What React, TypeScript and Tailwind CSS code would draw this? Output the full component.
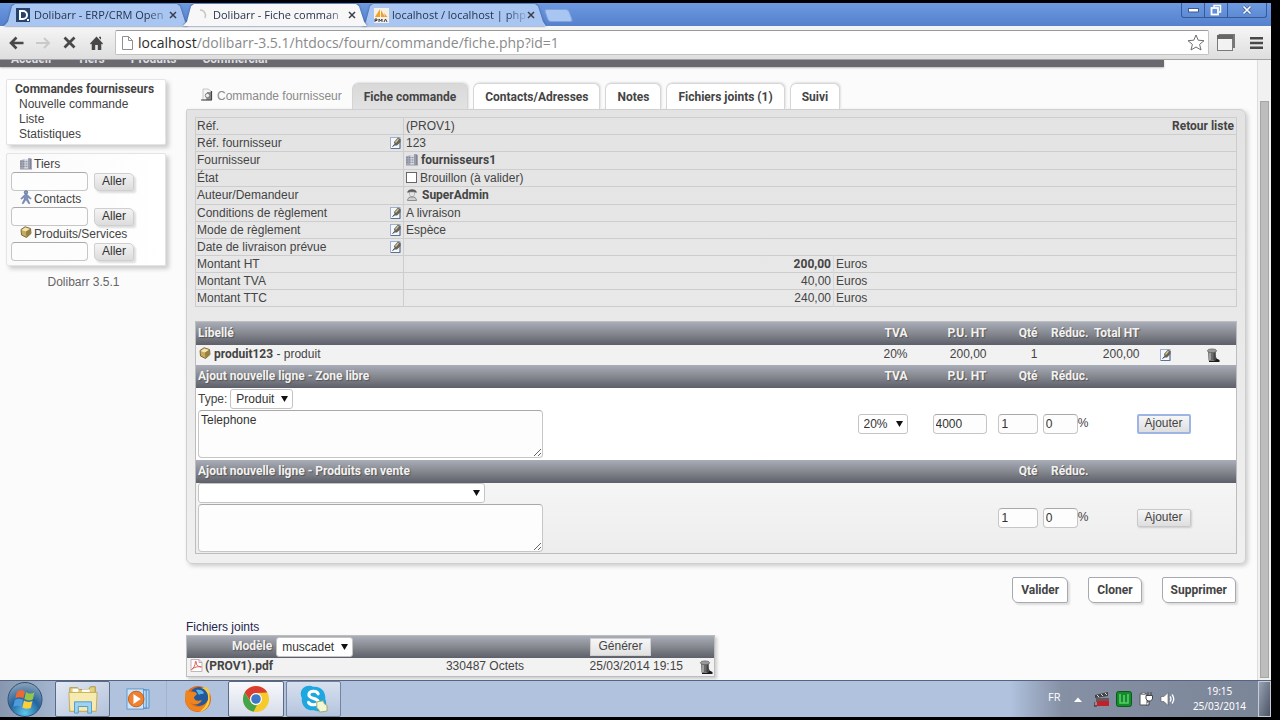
import React from "react";

const FIELD =
  "rounded-[4px] border border-[#c6c6c6] border-t-[#a9a9a9] bg-[#fdfdfd] text-[12px] text-[#333] outline-none";

const BOLD = "font-['Roboto','Liberation_Sans',sans-serif] font-bold";

function EditIcon() {
  return (
    <svg className="block shrink-0" width="11" height="13" viewBox="0 0 11 13">
      <rect x=".5" y="1.5" width="9.5" height="11" fill="#f4f8fd" stroke="#9db0d0" />
      <path d="M10 3v9.500H1" stroke="#5d6f94" fill="none" />
      <path d="M3 9.500l1.500-1.500L4 6l4-4.500L10.500 3v3L7 9.500z" fill="#66645a" />
      <path d="M5.500 6.500l3-3.500" stroke="#d8c98c" strokeWidth="1.200" />
      <path d="M2.500 10.500l2-1.500" stroke="#333" />
    </svg>
  );
}

function TrashIcon() {
  return (
    <svg className="block shrink-0" width="14" height="14" viewBox="0 0 14 14">
      <path d="M8.500 3.500l2 7 3 1.500v2H3v-1.500h5z" fill="#1c1c1c" />
      <path d="M2 3h8l-.5 9.500h-7z" fill="#6a6a6a" />
      <path d="M4 4v8" stroke="#b2b2b2" strokeWidth="1.500" />
      <path d="M8.500 4l-.3 8" stroke="#444" strokeWidth="1.500" />
      <ellipse cx="6" cy="2.800" rx="4.600" ry="1.900" fill="#9a9a9a" stroke="#5c5c5c" strokeWidth=".7" />
    </svg>
  );
}

function CompanyIcon() {
  return (
    <svg className="-mt-[2px] inline-block shrink-0" width="13" height="13" viewBox="0 0 14 13">
      <path d="M0 3l5-1v10.500H0z" fill="#a5a8b4" />
      <path d="M5 2h4v10.500H5z" fill="#d5d8e0" />
      <path d="M9 .5l3.500.8v11H9z" fill="#74788a" />
      <path d="M0 4.500h9M0 7h9M0 9.500h9" stroke="#7b8092" strokeDasharray="2 1" />
      <path d="M10.500 1v11" stroke="#a9adbb" />
      <path d="M0 12.500h13" stroke="#9b9ba3" />
    </svg>
  );
}

function PersonIcon() {
  return (
    <svg className="-mt-[4px] inline-block shrink-0" width="12" height="14" viewBox="0 0 12 14">
      <circle cx="6" cy="2.400" r="1.700" fill="#8a9cc0" stroke="#526693" strokeWidth=".8" />
      <path d="M5 4.300h2l4.200 4.200-.7.700L7.700 7l.3 2.500 1.900 4H8.500L6 9.500l-2.500 4H2.100l1.900-4L4.300 7 1.500 9.200.8 8.500z" fill="#7d90b8" stroke="#5b6f9c" strokeWidth=".5" />
    </svg>
  );
}

function ProductIcon() {
  return (
    <svg className="-mt-[4px] inline-block shrink-0" width="12" height="12" viewBox="0 0 12 12">
      <path d="M1 3.500L5 .8l5.500 1.700.5 5L6.500 11.500 1.500 9z" fill="#c9a95a" stroke="#6f6034" strokeWidth=".9" />
      <path d="M1.500 4L5.200 1.500 10 3 6 5.500z" fill="#f3e6b4" />
      <path d="M6 5.500l.4 5.600 4.100-3.600L10 3z" fill="#96803f" />
    </svg>
  );
}

function UserIcon() {
  return (
    <svg className="-mt-[3px] inline-block shrink-0" width="12" height="13" viewBox="0 0 12 13">
      <path d="M1 4.500C2 0 10 0 11 4.500z" fill="#5c5c5c" />
      <path d="M3.500 4h5v2.500L7.500 8.500h-3l-1-2z" fill="#e4e4e4" stroke="#999" strokeWidth=".6" />
      <path d="M1.500 12.500C1.500 9.500 4 9 6 9s4.500.5 4.500 3.500z" fill="#cfcfcf" stroke="#777" strokeWidth=".8" />
    </svg>
  );
}

function OrderIcon() {
  return (
    <svg className="-mt-[4px] block shrink-0" width="12" height="13" viewBox="0 0 12 13">
      <path d="M2 1h5l3 2v9H2z" fill="#f4f4f4" stroke="#bbb" strokeWidth=".8" />
      <path d="M6 1v3h4v8H5l1-5z" fill="#8d8d8d" />
      <circle cx="6.500" cy="7.500" r="2.200" fill="#eee" stroke="#666" strokeWidth=".8" />
      <path d="M0 12h11M10.500 3v9" stroke="#444" strokeWidth="1.200" />
    </svg>
  );
}

function PdfIcon() {
  return (
    <svg className="-mt-[3px] inline-block shrink-0" width="13" height="13" viewBox="0 0 13 13">
      <path d="M1 .5h8l3 3v9H1z" fill="#fff" stroke="#c4b4b4" />
      <path d="M9 .5v3h3" fill="none" stroke="#b9a5a5" />
      <path d="M1.500 10.500c2-1 4-4.500 3.800-7.500 0-1 1-1 .9 0C6 6 8 8 11.500 8 8 6.800 4 8.500 1.500 10.500z" fill="none" stroke="#d8605a" />
    </svg>
  );
}

function CloseX() {
  return (
    <svg width="8" height="8" viewBox="0 0 8 8">
      <path d="M1 1l6 6M7 1L1 7" stroke="#3c3f4a" strokeWidth="1.500" />
    </svg>
  );
}

function BrowserTab({ icon, title, active, first }: { icon: React.ReactNode; title: string; active?: boolean; first?: boolean }) {
  return (
    <div className={`${active ? "z-10" : ""} ${first ? "" : "-ml-[5px]"} drop-shadow-[0_0_1px_#2f4f8c]`}>
      <div
        className={`${active ? "bg-[#f7f7f7]" : "bg-[#a9c6f2]"} flex h-[22px] w-[184px] items-center pr-[10px] pl-[12px] [clip-path:polygon(0_100%,4px_80%,8px_10%,11px_0,173px_0,176px_10%,181px_80%,100%_100%)]`}
      >
        <span className="flex w-[18px] shrink-0">{icon}</span>
        <button className="w-[134px] shrink-0 text-left text-[11px] leading-[20px] whitespace-nowrap text-[#26334d] [mask-image:linear-gradient(to_right,#000_114px,transparent_138px)]">
          {title}
        </button>
        <button aria-label="Fermer l'onglet" className="ml-[1px]">
          <CloseX />
        </button>
      </div>
    </div>
  );
}

function BrowserTop() {
  return (
    <header className="shrink-0 font-['Open_Sans',sans-serif]">
      <div className="flex h-[23px] items-end bg-linear-to-b from-[#6d9ae0] to-[#5580cc] pl-[4px]">
        <BrowserTab
          first
          title="Dolibarr - ERP/CRM Open"
          icon={
            <svg width="14" height="14" viewBox="0 0 14 14">
              <rect width="14" height="14" fill="#25436b" />
              <path d="M4 3h3a4 4 0 010 8H4z" fill="none" stroke="#fff" strokeWidth="2" />
              <rect x="11" y="11" width="2" height="2" fill="#fff" />
            </svg>
          }
        />
        <BrowserTab
          active
          title="Dolibarr - Fiche comman"
          icon={
            <svg width="14" height="14" viewBox="0 0 14 14">
              <path d="M5 2a5.500 5.500 0 015 8" fill="none" stroke="#c6c6c6" strokeWidth="1.600" />
            </svg>
          }
        />
        <BrowserTab
          title="localhost / localhost | php"
          icon={
            <svg width="15" height="15" viewBox="0 0 15 15">
              <rect width="15" height="15" fill="#f6f1e6" />
              <path d="M1 9L6 1v8zM7 9V2l4 7zM11 9l-1-4 3.500 4z" fill="#f0a02c" />
              <path d="M1 14v-3h2v1.500H1M5 14v-3l1.500 2L8 11v3M10 14l1.500-3 1.500 3" fill="none" stroke="#3b3b55" />
            </svg>
          }
        />
        <button aria-label="Nouvel onglet" className="mb-[4px] h-[13px] w-[25px] skew-x-[20deg] rounded-[3px] border border-[#7ea3de] bg-[#a9c6f2]" />
        <div className="mr-[4px] ml-auto flex h-[15px] self-start rounded-b-[3px] border border-t-0 border-[#35599c]">
          <button aria-label="Réduire" className="flex w-[23px] items-center justify-center border-r border-[#35599c]">
            <svg width="11" height="5" viewBox="0 0 11 5">
              <rect x=".5" y=".5" width="10" height="3.500" fill="#fff" stroke="#3c5a91" />
            </svg>
          </button>
          <button aria-label="Restaurer" className="flex w-[23px] items-center justify-center border-r border-[#35599c]">
            <svg width="12" height="12" viewBox="0 0 12 12" fill="none">
              <path d="M4 3V1.500h6.500V8H9" stroke="#fff" strokeWidth="1.500" />
              <rect x="1.500" y="4" width="6.500" height="6.500" stroke="#fff" strokeWidth="1.800" />
            </svg>
          </button>
          <button aria-label="Fermer" className="flex w-[38px] items-center justify-center">
            <svg width="10" height="10" viewBox="0 0 10 10">
              <path d="M1.500 1.500l7 7M8.500 1.500l-7 7" stroke="#3c5a91" strokeWidth="3" />
              <path d="M1.500 1.500l7 7M8.500 1.500l-7 7" stroke="#fff" strokeWidth="1.700" />
            </svg>
          </button>
        </div>
      </div>
      <div className="flex h-[34px] items-center border-b border-[#a3a3a3] bg-linear-to-b from-[#f6f6f6] to-[#dedede] pr-[8px] pl-[9px]">
        <button aria-label="Retour" className="w-[27px]">
          <svg width="15" height="14" viewBox="0 0 15 14" fill="none" stroke="#484848" strokeWidth="2.600">
            <path d="M14.500 7H2M7.500 1.500L2 7l5.500 5.500" />
          </svg>
        </button>
        <button aria-label="Avancer" className="w-[27px]">
          <svg width="15" height="14" viewBox="0 0 15 14" fill="none" stroke="#c9c9c9" strokeWidth="2">
            <path d="M0 7h13M8 2l5 5-5 5" />
          </svg>
        </button>
        <button aria-label="Arrêter" className="w-[27px]">
          <svg width="13" height="13" viewBox="0 0 13 13" stroke="#484848" strokeWidth="2.800">
            <path d="M1.500 1.500l10 10M11.500 1.500l-10 10" />
          </svg>
        </button>
        <button aria-label="Accueil" className="w-[25px]">
          <svg width="13" height="14" viewBox="0 0 15 14" fill="#484848" preserveAspectRatio="none">
            <path d="M7.500.5L15 7.500l-1 1-1-.8V14H9V9H6v5H2V7.700l-1 .8-1-1zM10.500.8h2.200v3l-2.200-2z" />
          </svg>
        </button>
        <div className="flex h-[25px] min-w-0 flex-1 items-center rounded-[2px] border border-[#c2c2c2] border-t-[#9a9a9a] bg-white pr-[3px] pl-[6px]">
          <svg className="shrink-0" width="11" height="14" viewBox="0 0 11 14" fill="none" stroke="#8f8f8f">
            <path d="M.5.5h6l4 4v9H.5zM6.500.5v4h4" />
          </svg>
          <div className="ml-[5px] min-w-0 flex-1 truncate text-[14px] leading-[22px] text-[#8a8a8a]">
            <span className="text-[#2c2c2c]">localhost</span>/dolibarr-3.5.1/htdocs/fourn/commande/fiche.php?id=1
          </div>
          <button aria-label="Favoris">
            <svg width="18" height="17" viewBox="0 0 18 17" fill="none" stroke="#6e6e6e">
              <path d="M9 1l2.200 5.200 5.800.5-4.400 3.700 1.400 5.600L9 13l-5 3 1.400-5.600L1 6.700l5.800-.5z" />
            </svg>
          </button>
        </div>
        <button aria-label="Extension" className="ml-[8px]">
          <svg width="18" height="17" viewBox="0 0 18 17">
            <path d="M2 0h16v14h-2V3H0z" fill="#777" />
            <rect x=".5" y="3" width="15" height="13.500" fill="#f2f2f2" stroke="#7a7a7a" />
            <path d="M0 1h16v4H0z" fill="#666" />
          </svg>
        </button>
        <button aria-label="Menu" className="ml-[15px]">
          <svg width="13" height="12" viewBox="0 0 13 12" fill="#484848">
            <path d="M0 0h13v2.500H0zM0 4.700h13v2.500H0zM0 9.400h13v2.500H0z" />
          </svg>
        </button>
      </div>
    </header>
  );
}

function SearchBlock({ id, label, icon }: { id: string; label: string; icon: React.ReactNode }) {
  return (
    <div>
      <label htmlFor={id} className="flex h-[16px] items-center pl-[11px]">
        <span className="flex w-[16px] justify-center">{icon}</span>
        {label}
      </label>
      <div className="flex h-[19px] items-center gap-[6px] pl-[4px]">
        <input id={id} className={`${FIELD} h-[19px] w-[77px]`} />
        <button className="h-[18px] rounded-[2px] rounded-tr-[5px] rounded-bl-[5px] border border-[#cfcfcf] bg-linear-to-b from-[#f4f4f4] to-[#dcdcdc] px-[7px] text-[12px] leading-[15px] text-[#333] shadow-[2px_2px_2px_#ddd]">
          Aller
        </button>
      </div>
    </div>
  );
}

function Sidebar() {
  return (
    <aside className="w-[160px] shrink-0 pt-[12px] text-[12px] leading-[15px]">
      <nav className="flex flex-col rounded-[2px] border border-[#e4e4e4] bg-white pt-[2px] pb-[2px] pl-[8px] shadow-[3px_3px_4px_#ccc]">
        <a href="#commandes" className={`${BOLD} whitespace-nowrap`}>Commandes fournisseurs</a>
        <a href="#nouvelle" className="pl-[4px]">Nouvelle commande</a>
        <a href="#liste" className="pl-[4px]">Liste</a>
        <a href="#stats" className="pl-[4px]">Statistiques</a>
      </nav>
      <div className="mt-[8px] rounded-[2px] border border-[#e4e4e4] bg-linear-to-r from-[#fafafa] to-white pt-[2px] pb-[4px] shadow-[3px_3px_4px_#ccc]">
        <SearchBlock id="q-tiers" label="Tiers" icon={<CompanyIcon />} />
        <SearchBlock id="q-contacts" label="Contacts" icon={<PersonIcon />} />
        <SearchBlock id="q-produits" label="Produits/Services" icon={<ProductIcon />} />
      </div>
      <p className="mt-[9px] pr-[5px] text-center text-[#666]">Dolibarr 3.5.1</p>
    </aside>
  );
}

function Tabs() {
  const tabs = ["Fiche commande", "Contacts/Adresses", "Notes", "Fichiers joints (1)", "Suivi"];
  return (
    <div className="flex h-[26px] items-stretch gap-[5px] pl-[15px] text-[12px]">
      <div className="mr-[5px] flex items-center gap-[4px] text-[#8a8a8a]">
        <OrderIcon />
        <h1 className="whitespace-nowrap">Commande fournisseur</h1>
      </div>
      {tabs.map((t, i) => (
        <a
          key={t}
          href={`#tab${i}`}
          className={`${i === 0 ? "border-[#d4d4d4] bg-linear-to-b from-[#d9d9d9] to-[#e2e2e2]" : "border-[#d6d6d6] bg-white"} ${BOLD} flex items-center rounded-t-[6px] border border-b-0 px-[11px] whitespace-nowrap shadow-[1px_-1px_2px_#e2e2e2]`}
        >
          {t}
        </a>
      ))}
    </div>
  );
}

function InfoRow({ label, h = "h-[17px]", edit, children }: { label: string; h?: string; edit?: boolean; children?: React.ReactNode }) {
  return (
    <tr className={`${h} border-t border-[#cdcdcd]`}>
      <th className="border-r border-[#cdcdcd] p-0 pl-[1px] text-left font-normal">
        <div className="flex items-center justify-between pr-[2px]">
          {label}
          {edit && (
            <button aria-label={`Modifier ${label}`} className="-mt-[3px] -mb-[1px]">
              <EditIcon />
            </button>
          )}
        </div>
      </th>
      {children ?? <td colSpan={3} />}
    </tr>
  );
}

function Amount({ value, bold }: { value: string; bold?: boolean }) {
  return (
    <>
      <td className={`${bold ? BOLD : ""} border-r border-[#d8d8d8] p-0 pr-[2px] text-right`}>{value}</td>
      <td colSpan={2} className="p-0 pl-[2px]">Euros</td>
    </>
  );
}

function InfoTable() {
  return (
    <table className="w-full table-fixed border-collapse border border-[#cdcdcd] text-[12px] leading-[15px]">
      <colgroup>
        <col className="w-[208px]" />
        <col className="w-[430px]" />
        <col />
        <col className="w-[100px]" />
      </colgroup>
      <tbody>
        <InfoRow label="Réf.">
          <td colSpan={2} className="p-0 pl-[2px]">(PROV1)</td>
          <td className={`${BOLD} p-0 pr-[2px] text-right whitespace-nowrap`}><a href="#retour">Retour liste</a></td>
        </InfoRow>
        <InfoRow label="Réf. fournisseur" edit><td colSpan={3} className="p-0 pl-[2px]">123</td></InfoRow>
        <InfoRow label="Fournisseur" h="h-[18px]">
          <td colSpan={3} className={`${BOLD} p-0 pl-[2px]`}>
            <a href="#f1" className="flex items-center gap-[2px]"><CompanyIcon />fournisseurs1</a>
          </td>
        </InfoRow>
        <InfoRow label="État">
          <td colSpan={3} className="p-0 pl-[2px]">
            <label className="flex items-center gap-[3px]">
              <input type="checkbox" className="-mt-[2px] h-[11px] w-[11px] appearance-none border border-[#666] bg-white" />
              Brouillon (à valider)
            </label>
          </td>
        </InfoRow>
        <InfoRow label="Auteur/Demandeur" h="h-[18px]">
          <td colSpan={3} className={`${BOLD} p-0 pl-[2px]`}>
            <a href="#admin" className="flex items-center gap-[4px]"><UserIcon />SuperAdmin</a>
          </td>
        </InfoRow>
        <InfoRow label="Conditions de règlement" edit><td colSpan={3} className="p-0 pl-[2px]">A livraison</td></InfoRow>
        <InfoRow label="Mode de règlement" edit><td colSpan={3} className="p-0 pl-[2px]">Espèce</td></InfoRow>
        <InfoRow label="Date de livraison prévue" edit />
        <InfoRow label="Montant HT"><Amount value="200,00" bold /></InfoRow>
        <InfoRow label="Montant TVA"><Amount value="40,00" /></InfoRow>
        <InfoRow label="Montant TTC"><Amount value="240,00" /></InfoRow>
      </tbody>
    </table>
  );
}

function Select({ label, value, width, id }: { label: string; value: string; width: string; id?: string }) {
  return (
    <span className={`relative inline-block align-top ${width}`}>
      <select
        id={id}
        aria-label={label}
        className="block h-[20px] w-full appearance-none rounded-[3px] border border-[#c4c4c4] bg-white pl-[5px] font-['Liberation_Sans',Arial,sans-serif] text-[12px] leading-[16px] font-normal text-[#333]"
      >
        <option>{value}</option>
      </select>
      <svg className="pointer-events-none absolute top-[7px] right-[5px]" width="7" height="6" viewBox="0 0 7 6">
        <path d="M0 0h7L3.500 6z" fill="#111" />
      </svg>
    </span>
  );
}

function HeadRow({ cells }: { cells: string[] }) {
  return (
    <tr className={`${BOLD} h-[23px] bg-linear-to-b from-[#a9adb8] via-[#85888f] to-[#5d6069] text-[#f2f2f2] [text-shadow:1px_1px_1px_#555]`}>
      {cells.map((c, i) => (
        <th key={i} className={`${i === 0 ? "pl-[2px] text-left" : "pr-[2px] text-right"} p-0 whitespace-nowrap`}>
          {c}
        </th>
      ))}
    </tr>
  );
}

function QtyCells({ prefix }: { prefix: string }) {
  return (
    <>
      <td className="p-0 pr-[2px] text-right">
        <input aria-label="Qté" id={`${prefix}-qty`} defaultValue="1" className={`${FIELD} h-[20px] w-[40px] px-[3px] align-middle`} />
      </td>
      <td className="p-0 pr-[2px]">
        <div className="flex items-center justify-end">
          <input aria-label="Réduc." id={`${prefix}-red`} defaultValue="0" className={`${FIELD} h-[20px] w-[35px] px-[2px]`} />%
        </div>
      </td>
      <td />
    </>
  );
}

function LinesTable() {
  return (
    <table className="mt-[14px] w-full table-fixed border-collapse border border-[#bdbdbd] text-[12px] leading-[15px]">
      <colgroup>
        <col />
        <col className="w-[60px]" />
        <col className="w-[79px]" />
        <col className="w-[51px]" />
        <col className="w-[51px]" />
        <col className="w-[51px]" />
        <col className="w-[48px]" />
        <col className="w-[47px]" />
      </colgroup>
      <tbody>
        <HeadRow cells={["Libellé", "TVA", "P.U. HT", "Qté", "Réduc.", "Total HT", "", ""]} />
        <tr className="h-[20px] bg-[#f2f2f2]">
          <td className="p-0 pl-[3px]">
            <div className="flex items-center"><ProductIcon /><a href="#p123" className={`${BOLD} ml-[3px]`}>produit123</a>&nbsp;- produit</div>
          </td>
          <td className="p-0 pr-[2px] text-right">20%</td>
          <td className="p-0 pr-[2px] text-right">200,00</td>
          <td className="p-0 pr-[2px] text-right">1</td>
          <td />
          <td className="p-0 pr-[2px] text-right">200,00</td>
          <td className="p-0"><button aria-label="Modifier la ligne" className="mx-auto block"><EditIcon /></button></td>
          <td className="p-0"><button aria-label="Supprimer la ligne" className="mx-auto block"><TrashIcon /></button></td>
        </tr>
        <HeadRow cells={["Ajout nouvelle ligne - Zone libre", "TVA", "P.U. HT", "Qté", "Réduc.", "", "", ""]} />
        <tr className="h-[72px] bg-white">
          <td className="p-0 pl-[2px]">
            <div className="flex items-center gap-[3px] whitespace-nowrap">
              <label htmlFor="type">Type:</label>
              <Select id="type" label="Type" value="Produit" width="w-[63px]" />
            </div>
            <textarea aria-label="Description" defaultValue="Telephone" className={`${FIELD} mt-[1px] block h-[48px] w-[345px] px-[2px] pt-[2px] leading-[15px]`} />
          </td>
          <td className="p-0 pr-[2px] text-right"><Select label="TVA" value="20%" width="w-[50px]" /></td>
          <td className="p-0 pr-[2px] text-right"><input aria-label="P.U. HT" defaultValue="4000" className={`${FIELD} h-[20px] w-[54px] px-[2px] align-middle`} /></td>
          <QtyCells prefix="libre" />
          <td className="p-0">
            <button className="-ml-[5px] h-[20px] w-[54px] rounded-[2px] border-2 border-[#9db4e4] bg-linear-to-b from-[#f6f6f6] to-[#dedede] text-[12px] leading-[15px]">Ajouter</button>
          </td>
          <td />
        </tr>
        <HeadRow cells={["Ajout nouvelle ligne - Produits en vente", "", "", "Qté", "Réduc.", "", "", ""]} />
        <tr className="h-[71px] bg-linear-to-b from-[#f5f5f5] to-[#ededed]">
          <td className="p-0 pl-[2px]">
            <Select label="Produit en vente" value="" width="w-[287px]" />
            <textarea aria-label="Description du produit" className={`${FIELD} mt-[1px] block h-[48px] w-[345px] px-[2px]`} />
          </td>
          <td />
          <td />
          <QtyCells prefix="vente" />
          <td className="p-0">
            <button className="-ml-[5px] h-[18px] w-[54px] rounded-[2px] border border-[#c8c8c8] bg-linear-to-b from-[#f6f6f6] to-[#dedede] text-[12px] leading-[15px] shadow-[1px_1px_2px_#ccc]">Ajouter</button>
          </td>
          <td />
        </tr>
      </tbody>
    </table>
  );
}

function Files() {
  return (
    <section className="mt-[17px] w-[529px] text-[12px] leading-[15px]">
      <h2 className="text-[#25254d]">Fichiers joints</h2>
      <table className="w-full border-collapse border border-[#bdbdbd] shadow-[2px_2px_3px_#ccc]">
        <tbody>
          <tr className="h-[22px] bg-linear-to-b from-[#a9adb8] via-[#85888f] to-[#5d6069]">
            <th colSpan={2} className="p-0 pl-[45px] text-left text-[#f2f2f2]">
              <div className="flex items-center gap-[4px]">
                <label htmlFor="modele" className={`${BOLD} [text-shadow:1px_1px_1px_#555]`}>Modèle</label>
                <Select id="modele" label="Modèle" value="muscadet" width="w-[77px]" />
              </div>
            </th>
            <td className="p-0 pl-[18px] text-center">
              <button className="h-[18px] border border-[#d0d0d0] bg-linear-to-b from-[#f6f6f6] to-[#e2e2e2] px-[7px] leading-[15px]">Générer</button>
            </td>
            <td />
          </tr>
          <tr className="h-[19px] bg-[#f2f2f2]">
            <td className="p-0 pl-[3px]"><a href="#pdf" className={`${BOLD} flex items-center gap-[2px]`}><PdfIcon />(PROV1).pdf</a></td>
            <td className="w-[110px] p-0 text-right">330487 Octets</td>
            <td className="w-[175px] p-0 pr-[16px] text-right">25/03/2014 19:15</td>
            <td className="w-[1px] p-0 pr-[1px]"><button aria-label="Supprimer le fichier" className="block"><TrashIcon /></button></td>
          </tr>
        </tbody>
      </table>
    </section>
  );
}

function Page() {
  return (
    <div className="flex min-h-0 flex-1 bg-[#fbfbfb] font-['Liberation_Sans',Arial,sans-serif] text-[#444]">
      <div className="min-w-0 flex-1 overflow-hidden">
        <nav className={`${BOLD} mr-[93px] flex h-[7px] items-end gap-[26px] overflow-hidden bg-[#6a6970] pb-[1px] pl-[11px] text-[12px] leading-[14px] text-[#dddde2] shadow-[0_1px_2px_#bbb]`}>
          <a href="#accueil">Accueil</a>
          <a href="#tiers">Tiers</a>
          <a href="#produits">Produits</a>
          <a href="#commercial">Commercial</a>
        </nav>
        <div className="flex pr-[11px] pl-[6px]">
          <Sidebar />
          <main className="ml-[20px] min-w-0 flex-1 pt-[16px]">
            <Tabs />
            <div className="rounded-[6px] rounded-tl-[2px] border border-[#cfcfcf] bg-linear-to-b from-[#e3e3e3] to-[#f0f0f0] px-[8px] pt-[7px] pb-[9px] shadow-[2px_2px_4px_#ccc]">
              <InfoTable />
              <LinesTable />
            </div>
            <div className="mt-[13px] flex justify-end gap-[20px] pr-[10px] text-[12px]">
              {["Valider", "Cloner", "Supprimer"].map((b) => (
                <button key={b} className={`${BOLD} h-[26px] rounded-[2px] rounded-tr-[6px] rounded-bl-[6px] border border-[#a8a8b0] bg-white px-[8px] shadow-[2px_2px_2px_#ddd]`}>
                  {b}
                </button>
              ))}
            </div>
            <Files />
          </main>
        </div>
      </div>
      <div className="flex w-[14px] shrink-0 justify-center border-l border-[#dcdcdc] bg-[#f1f1f1] pt-[41px] pb-[2px]">
        <div className="w-[9px] border border-[#a5a5a5] bg-[#bdbdbd]" />
      </div>
    </div>
  );
}

function Taskbar() {
  return (
    <footer className="flex h-[37px] shrink-0 items-stretch border-t border-[#56657f] bg-linear-to-r from-[#8797af] via-[#b0c2de] via-6% to-[#b0c2de] font-['Open_Sans',sans-serif]">
      <button aria-label="Démarrer" className="flex w-[55px] items-center justify-center pr-[6px]">
        <svg width="36" height="35" viewBox="0 0 36 35">
          <defs>
            <radialGradient id="orb" cx=".5" cy=".9" r=".9">
              <stop offset="0" stopColor="#5cc6ee" />
              <stop offset=".5" stopColor="#24649d" />
              <stop offset="1" stopColor="#8fa4bb" />
            </radialGradient>
          </defs>
          <circle cx="18" cy="17.500" r="17" fill="url(#orb)" stroke="#33506f" />
          <path d="M10 9.500c3-2 5.500-2 8 0l-1.700 7c-2.700-1.700-5.300-1.700-8 0z" fill="#ea6a35" />
          <path d="M19 10c3 2 5.500 2 8.500.5l-1.700 7c-3 1.500-5.800 1-8.500-.5z" fill="#94c548" />
          <path d="M7.800 18c3-1.800 5.500-1.800 8.200 0l-1.700 7c-2.700-1.700-5.300-1.700-8 0z" fill="#4d9bdd" />
          <path d="M17 18.500c3 1.800 5.500 1.800 8.500.5l-1.700 7c-3 1.300-5.800 1-8.500-.5z" fill="#f9cf3b" />
        </svg>
      </button>
      <button aria-label="Explorateur" className="flex w-[55px] items-center justify-center rounded-[2px] border border-[#5c6a83] bg-linear-to-br from-[#e3e9f4] to-[#b3c1da]">
        <svg width="32" height="30" viewBox="0 0 34 30">
          <path d="M3 3h8l2 2h10l2-3h5v26H3z" fill="#e5d07b" stroke="#ab9345" />
          <path d="M6 4h6v4H6zM16 5h8v4h-8z" fill="#fff" />
          <path d="M2 8h30l-1 20H3z" fill="#f6eab0" stroke="#c3ab57" />
          <path d="M8 30V18h18v12h-4v-7H12v7z" fill="#9dd3f0" stroke="#4d9acb" />
        </svg>
      </button>
      <button aria-label="Lecteur multimédia" className="flex w-[57px] items-center justify-center border-r border-[#a1b3cf]">
        <svg width="26" height="22" viewBox="0 0 26 24">
          <path d="M8 2h17v20H8zM6 2h16v20H6z" fill="#b5d7f1" stroke="#4f8dc4" />
          <rect x="1" y="1" width="18" height="22" fill="#cfe4f6" stroke="#5b95c9" />
          <circle cx="11" cy="12" r="8.500" fill="#ee8232" stroke="#c45c12" />
          <path d="M8 6.500v11l8-5.500z" fill="#fff" />
        </svg>
      </button>
      <button aria-label="Firefox" className="flex w-[61px] items-center justify-center">
        <svg width="28" height="28" viewBox="0 0 28 28">
          <circle cx="14" cy="14" r="13" fill="#e36a17" />
          <circle cx="15" cy="11.500" r="9.500" fill="#235a9e" />
          <path d="M17 3c5 1 8 6 7 12 3-5 2-10-2-13z" fill="#f8c940" />
          <path d="M12 5c3-1 7 0 8 3-2 2-4 0-5 2z" fill="#5fb4df" />
          <path d="M2 5l4 2c3-1 6 0 7 2l-3 3c0 3 3 5 8 3-2 5-9 6-12 2 2 6 13 8 19-3 0 9-7 13-13 12C3 25-1 16 2 5z" fill="#ee8420" />
          <path d="M25 10c3 9-3 16-10 17 6-4 9-9 10-17z" fill="#fbd33f" />
        </svg>
      </button>
      <button aria-label="Chrome" className="flex w-[56px] items-center justify-center rounded-[2px] border border-[#5c6a83] bg-linear-to-b from-[#f8f9fc] to-[#d5dce9]">
        <svg width="28" height="28" viewBox="0 0 28 28">
          <circle cx="14" cy="14" r="13" fill="#f5ca2d" />
          <path d="M2.700 7.500A13 13 0 0125.300 7.500L14 8a6 6 0 00-5.500 8z" fill="#d93d31" />
          <path d="M2.700 7.500l6 9.500A6 6 0 0015 20l-3.500 6.800A13 13 0 012.700 7.500z" fill="#45a34b" />
          <circle cx="14" cy="14" r="6" fill="#fff" />
          <circle cx="14" cy="14" r="4.800" fill="#3f78c9" />
        </svg>
      </button>
      <button aria-label="Skype" className="ml-[2px] flex w-[55px] items-center justify-center rounded-[2px] border border-[#7484a0] bg-linear-to-b from-[#d7e0ef] to-[#b5c4de]">
        <svg width="28" height="28" viewBox="0 0 30 30">
          <path d="M8 1a7.500 7.500 0 016 1c8-1 14 5 13 13 4 8-4 16-12 12C7 28 1 22 2 14-1 8 2 2 8 1z" fill="#1da7e0" />
          <path d="M19.500 9.500C18 5.500 9.500 6 9.500 10.500c0 5 10 3 10 7.500 0 4-8.500 4.500-10.500.5" fill="none" stroke="#fff" strokeWidth="3.200" strokeLinecap="round" />
          <path d="M18 18l7-1 1 3 3 2v6l-8 1-1-3-2-1z" fill="#f2f7d5" stroke="#9ba765" />
        </svg>
      </button>
      <div className="ml-auto flex items-center bg-linear-to-r from-[#b0c2de] via-[#8590a4] via-20% to-[#7b8598] pl-[38px] text-[11px] text-white">
        <span className="w-[26px] pb-[4px]">FR</span>
        <button aria-label="Icônes cachées" className="w-[20px]">
          <svg width="8" height="5" viewBox="0 0 8 5"><path d="M0 5l4-4.500L8 5z" fill="#fff" /></svg>
        </button>
        <div className="flex w-[90px] items-center gap-[6px]">
          <svg width="16" height="16" viewBox="0 0 16 16">
            <path d="M1 4l13-3v4L1 7z" fill="#444" /><path d="M3 4l2 2M7 3l2 2M11 2l2 2" stroke="#ddd" />
            <path d="M2 7h13v4H2z" fill="#63585c" /><path d="M3 10h12v5H3z" fill="#c3202c" /><path d="M0 11v4h3" stroke="#511" fill="none" />
          </svg>
          <svg width="16" height="16" viewBox="0 0 16 16">
            <rect x=".5" y=".5" width="15" height="15" rx="2" fill="#178a2e" stroke="#0b5a1a" />
            <path d="M4 3v9h8V3M8 4v8" fill="none" stroke="#56cf68" strokeWidth="1.600" />
          </svg>
          <svg width="16" height="16" viewBox="0 0 16 16">
            <path d="M2 3h7v11H2z" fill="#fff" stroke="#555" /><path d="M4 1.500h3V3H4z" fill="#fff" stroke="#555" strokeWidth=".6" />
            <path d="M10 1v3M13 1v3M8 4.500h6.500V8l-2 2h-2.500l-2-2zM11 10v4H8" fill="#fff" stroke="#444" />
          </svg>
          <svg width="16" height="16" viewBox="0 0 16 16" fill="none" stroke="#fff">
            <path d="M1 5.500h3l4-4v13l-4-4H1z" fill="#fff" stroke="#555" strokeWidth=".6" />
            <path d="M10 5.500q2 2.500 0 5M12 3.500q3.500 4.500 0 9" strokeWidth="1.300" />
          </svg>
        </div>
        <div className="w-[71px] text-center font-['Noto_Sans',sans-serif] text-[10px] leading-[15px]">
          <div>19:15</div>
          <div>25/03/2014</div>
        </div>
        <button aria-label="Afficher le bureau" className="ml-[3px] h-full w-[13px] border border-[#c5ccd8] bg-linear-to-br from-[#9aa3b3] to-[#4c5566]" />
      </div>
    </footer>
  );
}

export default function App() {
  return (
    <div className="flex h-screen flex-col overflow-hidden bg-black pt-[3px] pr-[9px] pb-[3px]">
      <BrowserTop />
      <Page />
      <Taskbar />
    </div>
  );
}
